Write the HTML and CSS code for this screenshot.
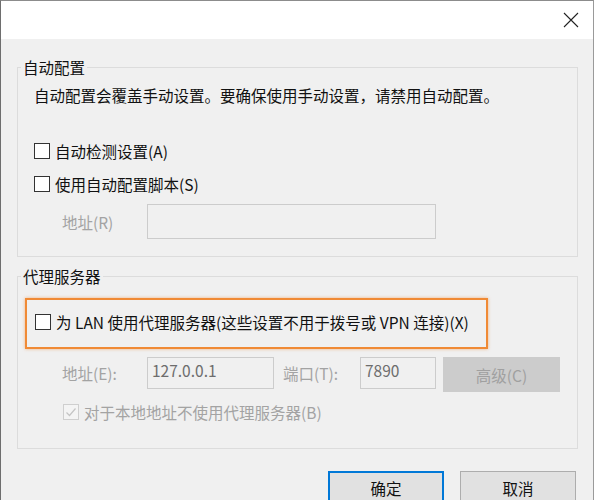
FILE: index.html
```html
<!DOCTYPE html>
<html lang="zh-CN">
<head>
<meta charset="utf-8">
<title>局域网(LAN)设置</title>
<link rel="stylesheet" href="styles.css">
</head>
<body>
<div class="window">
  <div class="titlebar">
    <svg class="close" width="16" height="16" viewBox="0 0 16 16"><path d="M1 1L15 15M15 1L1 15" stroke="#222" stroke-width="1.1" fill="none"/></svg>
  </div>
  <div class="content">
    <fieldset class="group group-auto">
      <legend>自动配置</legend>
      <div class="group-body">
        <p class="desc">自动配置会覆盖手动设置。要确保使用手动设置，请禁用自动配置。</p>
        <div class="check-row row-a"><span class="box"></span><span>自动检测设置(A)</span></div>
        <div class="check-row row-s"><span class="box"></span><span>使用自动配置脚本(S)</span></div>
        <div class="field-row row-r">
          <span class="dim label-r">地址(R)</span>
          <span class="input input-r"></span>
        </div>
      </div>
    </fieldset>
    <fieldset class="group group-proxy">
      <legend>代理服务器</legend>
      <div class="group-body">
        <div class="highlight">
          <div class="check-row"><span class="box"></span><span>为 LAN 使用代理服务器(这些设置不用于拨号或 VPN 连接)(X)</span></div>
        </div>
        <div class="field-row row-e">
          <span class="dim label-e">地址(E):</span>
          <span class="input input-e">127.0.0.1</span>
          <span class="dim label-t">端口(T):</span>
          <span class="input input-t">7890</span>
          <span class="btn-disabled">高级(C)</span>
        </div>
        <div class="check-row row-b dim">
          <span class="box box-checked">
            <svg width="14" height="14" viewBox="0 0 14 14"><path d="M2.5 7.5L5.5 10.5L11.5 3.5" stroke="#c4c4c4" stroke-width="1.2" fill="none"/></svg>
          </span>
          <span>对于本地地址不使用代理服务器(B)</span>
        </div>
      </div>
    </fieldset>
    <div class="actions">
      <span class="btn btn-default">确定</span>
      <span class="btn">取消</span>
    </div>
  </div>
</div>
</body>
</html>
```
FILE: styles.css
```css
html, body {
  margin: 0;
  padding: 0;
  background: #f0f0f0;
}
body {
  font-family: "Noto Sans CJK SC", "Noto Sans", sans-serif;
  font-size: 15.5px;
  color: #111;
}
.window {
  box-sizing: border-box;
  width: 594px;
  height: 500px;
  overflow: hidden;
  border-top: 1px solid #8c8c8c;
  border-left: 1px solid #6e6e6e;
  border-right: 1px solid #9a9a9a;
  background: #f0f0f0;
}
.titlebar {
  height: 38px;
  background: #fff;
  display: flex;
  justify-content: flex-end;
  align-items: flex-start;
}
.close {
  margin-top: 11px;
  margin-right: 14px;
}
.content {
  padding: 0 15px 0 16px;
}
.group {
  margin: 0;
  padding: 0;
  border: 1px solid #dcdcdc;
  min-width: 0;
}
.group legend {
  margin-left: 3px;
  padding: 0 2px;
  line-height: 20px;
  height: 20px;
}
.group-auto {
  margin-top: 18px;
}
.group-proxy {
  margin-top: 9px;
}
.group-body {
  padding: 0 0 0 16px;
}
.desc {
  margin: 8px 0 0;
  line-height: 20px;
}
.check-row {
  display: flex;
  align-items: center;
  height: 24px;
  line-height: 20px;
  gap: 5px;
}
.box {
  box-sizing: border-box;
  width: 16px;
  height: 16px;
  border: 1px solid #333;
  background: #fff;
  flex: none;
  display: flex;
  align-items: center;
  justify-content: center;
}
.box-checked {
  border-color: #cfcfcf;
  background: #f4f4f4;
}
.row-a {
  margin-top: 34px;
}
.row-s {
  margin-top: 9px;
}
.field-row {
  display: flex;
  align-items: center;
}
.row-r {
  margin-top: 8px;
  padding-bottom: 17px;
}
.dim {
  color: #a3a3a3;
}
.label-r, .label-e {
  margin-left: 28px;
  width: 85px;
}
.input {
  box-sizing: border-box;
  border: 1px solid #cccccc;
  background: #f0f0f0;
  color: #6d6d6d;
  line-height: 20px;
  padding: 0 0 0 4px;
}
.input-r {
  width: 289px;
  height: 35px;
}
.row-e {
  margin-top: 8px;
  align-items: flex-start;
}
.row-e .dim {
  line-height: 32px;
}
.input-e {
  width: 127px;
  height: 32px;
  padding-top: 2px;
}
.label-t {
  margin-left: 9px;
  width: 77px;
}
.input-t {
  width: 76px;
  height: 32px;
  padding-top: 2px;
}
.btn-disabled {
  box-sizing: border-box;
  margin-left: 7px;
  width: 117px;
  height: 35px;
  background: #cccccc;
  color: #a0a0a0;
  display: flex;
  align-items: center;
  justify-content: center;
}
.highlight {
  box-sizing: border-box;
  margin: 12px 0 0 -9px;
  width: 463px;
  height: 51px;
  border: 2px solid #f08a35;
  box-shadow: 0 0 3px rgba(240, 138, 53, 0.6);
  padding: 0 0 4px 8px;
  display: flex;
  align-items: center;
}
.row-b {
  margin-top: 8px;
  padding-left: 29px;
  padding-bottom: 24px;
}
.actions {
  display: flex;
  justify-content: flex-end;
  gap: 16px;
  margin-top: 22px;
  padding-right: 2px;
}
.btn {
  box-sizing: border-box;
  width: 116px;
  height: 34px;
  border: 1px solid #adadad;
  background: #e1e1e1;
  display: flex;
  align-items: center;
  justify-content: center;
}
.btn-default {
  border: 2px solid #0078d7;
}
```
